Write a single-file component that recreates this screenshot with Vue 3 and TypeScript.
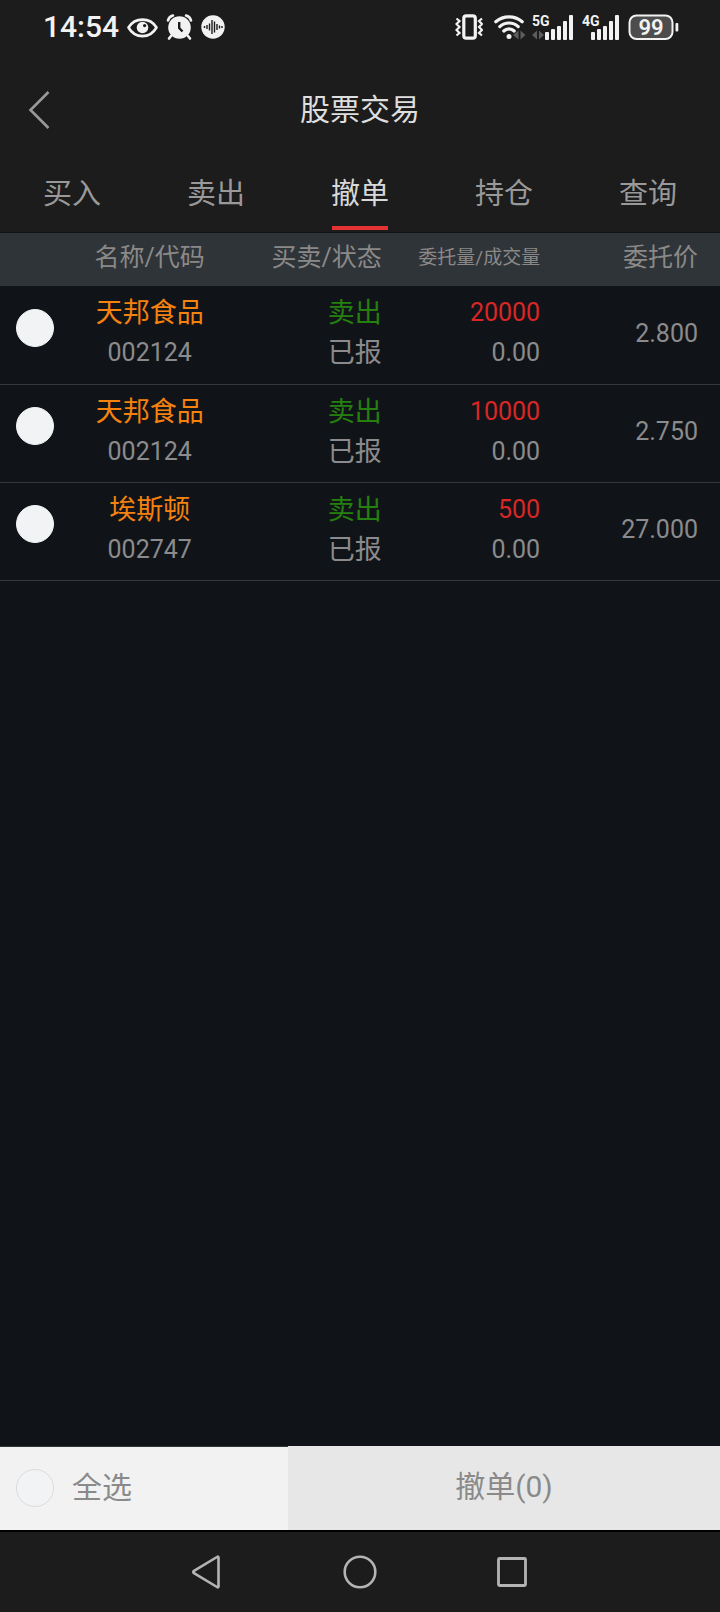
<script setup lang="ts">
import { computed, ref } from 'vue'

interface Order {
  id: number
  name: string
  code: string
  side: string
  status: string
  amount: string
  filled: string
  price: string
}

const tabs: string[] = ['买入', '卖出', '撤单', '持仓', '查询']
const activeTab = ref<string>('撤单')

const orders: Order[] = [
  { id: 1, name: '天邦食品', code: '002124', side: '卖出', status: '已报', amount: '20000', filled: '0.00', price: '2.800' },
  { id: 2, name: '天邦食品', code: '002124', side: '卖出', status: '已报', amount: '10000', filled: '0.00', price: '2.750' },
  { id: 3, name: '埃斯顿', code: '002747', side: '卖出', status: '已报', amount: '500', filled: '0.00', price: '27.000' },
]

const selected = ref<number[]>([])
const allSelected = computed<boolean>({
  get: () => selected.value.length === orders.length,
  set: (on) => {
    selected.value = on ? orders.map((o) => o.id) : []
  },
})
</script>

<template>
  <div class="screen">
    <div class="status">
      <div class="status-left">
        <span class="time">14:54</span>
        <svg class="eye" width="31" height="28" viewBox="0 0 31 28">
          <path d="M1.5 14.5C8 4 23 4 29.500 14.500C23 26 8 26 1.500 14.500Z" fill="none" stroke="#f2f2f2" stroke-width="2.600" stroke-linejoin="round" />
          <circle cx="15.500" cy="14.500" r="5.800" fill="#f2f2f2" />
          <circle cx="17.600" cy="12.600" r="1.600" fill="#1c1c1c" />
        </svg>
        <svg width="27" height="28" viewBox="0 0 27 28">
          <circle cx="13.500" cy="14.500" r="11.300" fill="#f2f2f2" />
          <path d="M2 7.500Q3 3.500 7 2.500M25 7.500Q24 3.500 20 2.500M5 23L3 25.500M22 23L24 25.500" fill="none" stroke="#f2f2f2" stroke-width="2.600" stroke-linecap="round" />
          <path d="M13.200 9V15L16.500 18.500" fill="none" stroke="#1c1c1c" stroke-width="2.400" />
        </svg>
        <svg width="24" height="28" viewBox="0 0 24 28">
          <circle cx="12" cy="14" r="11.700" fill="#f2f2f2" />
          <path d="M3.500 13V15M6 12V16M8.500 10.500V17.500M11 7V21M13.500 8.500V19.500M16 11V17M18.500 12.500V15.500M21 13V15" stroke="#1c1c1c" stroke-width="1.400" />
        </svg>
      </div>
      <div class="status-right">
        <svg class="vibrate" width="28" height="28" viewBox="0 0 28 28" fill="none" stroke="#f2f2f2">
          <rect x="8.800" y="2.800" width="11.500" height="22.400" rx="2.500" stroke-width="3.200" />
          <path d="M1.500 5.500L4.500 8L1.500 11L4.500 14L1.500 17L4.500 20L1.500 22.500M27 5.500L24 8L27 11L24 14L27 17L24 20L27 22.500" stroke-width="2.200" />
        </svg>
        <svg class="wifi" width="32" height="28" viewBox="0 0 32 28">
          <g fill="none" stroke="#f2f2f2" stroke-width="3.200" stroke-linecap="round">
            <path d="M1.800 8.800A20 20 0 0 1 28.200 8.800" />
            <path d="M5.800 13.600A13.500 13.500 0 0 1 24.200 13.600" />
            <path d="M9.800 18A7.500 7.500 0 0 1 20.200 18" />
          </g>
          <circle cx="15" cy="23.500" r="2.500" fill="#f2f2f2" />
          <path d="M24.500 17.500V26.500L19 22ZM26.500 17.500V26.500L31.500 22Z" fill="#5c5c5c" />
        </svg>
        <svg width="42" height="28" viewBox="0 0 42 28" fill="#f2f2f2">
          <text class="net" x="0" y="13">5G</text>
          <path d="M5 17.500V26.500L0 22ZM7 17.500V26.500L12 22Z" fill="#5c5c5c" />
          <rect x="13" y="19" width="4" height="8" rx="1" />
          <rect x="19" y="16" width="4" height="11" rx="1" />
          <rect x="25" y="13" width="4" height="14" rx="1" />
          <rect x="31" y="8" width="4" height="19" rx="1" />
          <rect x="37" y="2" width="4" height="25" rx="1" />
        </svg>
        <svg width="38" height="28" viewBox="0 0 38 28" fill="#f2f2f2">
          <text class="net" x="0" y="13">4G</text>
          <rect x="9" y="19" width="4" height="8" rx="1" />
          <rect x="15" y="16" width="4" height="11" rx="1" />
          <rect x="21" y="13" width="4" height="14" rx="1" />
          <rect x="27" y="8" width="4" height="19" rx="1" />
          <rect x="33" y="2" width="4" height="25" rx="1" />
        </svg>
        <svg width="51" height="28" viewBox="0 0 51 28">
          <rect x="1.500" y="2.500" width="43" height="23.500" rx="7" fill="#4d4d4d" stroke="#f2f2f2" stroke-width="2" />
          <rect x="47.500" y="10" width="2.800" height="8.500" rx="1" fill="#f2f2f2" />
          <text class="level" x="23" y="22" text-anchor="middle" fill="#f2f2f2">99</text>
        </svg>
      </div>
    </div>

    <header class="title-bar">
      <button class="back" type="button" aria-label="返回">
        <svg width="22" height="40" viewBox="0 0 22 40">
          <path d="M20.500 2L2.500 20L20.500 38" fill="none" stroke="#999" stroke-width="2.600" />
        </svg>
      </button>
      <h1>股票交易</h1>
    </header>

    <nav class="tabs">
      <button
        v-for="tab in tabs"
        :key="tab"
        type="button"
        class="tab"
        :class="{ active: tab === activeTab }"
        @click="activeTab = tab"
      >
        {{ tab }}
      </button>
    </nav>

    <main class="content">
      <table class="orders">
        <thead>
          <tr>
            <th class="pick"></th>
            <th class="name">名称/代码</th>
            <th class="side">买卖/状态</th>
            <th class="amount small">委托量/成交量</th>
            <th class="price">委托价</th>
          </tr>
        </thead>
        <tbody>
          <tr v-for="order in orders" :key="order.id">
            <td class="pick">
              <input v-model="selected" class="round" type="checkbox" :value="order.id" :aria-label="order.name" />
            </td>
            <td class="name">
              <div class="line orange">{{ order.name }}</div>
              <div class="line number">{{ order.code }}</div>
            </td>
            <td class="side">
              <div class="line green">{{ order.side }}</div>
              <div class="line">{{ order.status }}</div>
            </td>
            <td class="amount">
              <div class="line number red">{{ order.amount }}</div>
              <div class="line number">{{ order.filled }}</div>
            </td>
            <td class="price number">{{ order.price }}</td>
          </tr>
        </tbody>
      </table>
    </main>

    <footer class="actions">
      <label class="select-all">
        <input v-model="allSelected" class="round outlined" type="checkbox" />
        <span class="select-text">全选</span>
      </label>
      <button class="cancel" type="button">撤单({{ selected.length }})</button>
    </footer>

    <nav class="system">
      <button type="button" aria-label="返回上一页">
        <svg width="34" height="36" viewBox="0 0 34 36">
          <path d="M27.500 3.500V32.500Q27.500 34 26 33L3 19.200Q1.500 18 3 16.800L26 3Q27.500 2 27.500 3.500Z" fill="none" stroke="#b4b4b4" stroke-width="2.600" stroke-linejoin="round" />
        </svg>
      </button>
      <button type="button" aria-label="主屏幕">
        <svg width="34" height="36" viewBox="0 0 34 36">
          <circle cx="17" cy="18" r="15.300" fill="none" stroke="#b4b4b4" stroke-width="2.600" />
        </svg>
      </button>
      <button type="button" aria-label="最近任务">
        <svg width="34" height="36" viewBox="0 0 34 36">
          <rect x="3.500" y="4.500" width="27" height="27" rx="1" fill="none" stroke="#b4b4b4" stroke-width="2.800" />
        </svg>
      </button>
    </nav>
  </div>
</template>

<style>
body {
  margin: 0;
  background: #101418;
}
</style>

<style scoped>
.screen {
  display: flex;
  flex-direction: column;
  min-height: 100vh;
  background: #101418;
  color: #8b8b8d;
  font-family: Roboto, 'Noto Sans CJK SC', sans-serif;
}

button {
  border: 0;
  padding: 0;
  margin: 0;
  background: none;
  color: inherit;
  font: inherit;
  cursor: pointer;
}

svg {
  display: block;
}

.status {
  display: flex;
  justify-content: space-between;
  align-items: center;
  height: 54px;
  padding: 0 41px 0 43px;
  background: #1c1c1c;
}

.status-left,
.status-right {
  display: flex;
  align-items: center;
  gap: 8px;
}

.time {
  color: #f2f2f2;
  font-size: 30px;
  font-weight: 500;
  line-height: 32px;
}

.vibrate {
  margin-right: 3px;
}

.wifi {
  margin-right: -2px;
}

.net {
  font-size: 14px;
  font-weight: 700;
}

.level {
  font-size: 22px;
  font-weight: 600;
}

.title-bar {
  display: grid;
  grid-template-columns: 80px 1fr 80px;
  align-items: center;
  height: 112px;
  background: #1c1c1c;
}

.back {
  display: flex;
  align-items: center;
  height: 80px;
  padding-left: 28px;
}

h1 {
  margin: 0;
  color: #dedede;
  font-size: 30px;
  font-weight: 400;
  line-height: 42px;
  text-align: center;
}

.tabs {
  display: grid;
  grid-template-columns: repeat(5, 1fr);
  height: 66px;
  border-bottom: 1px solid #101418;
  background: #1c1c1c;
}

.tab {
  display: flex;
  flex-direction: column;
  align-items: center;
  justify-content: space-between;
  padding: 8px 0 2px;
  color: #999;
  font-size: 29px;
  line-height: 40px;
}

.tab::after {
  content: '';
  width: 56px;
  height: 4px;
}

.tab.active {
  color: #d8d8d8;
}

.tab.active::after {
  background: #e53333;
}

.content {
  flex: 1;
}

.orders {
  width: 100%;
  table-layout: fixed;
  border-collapse: collapse;
  font-size: 27px;
}

th,
td {
  box-sizing: border-box;
  padding: 0 0 3px;
}

th {
  height: 53px;
  background: #2f3438;
  color: #8b8988;
  font-size: 25px;
  font-weight: 400;
  line-height: 32px;
  white-space: nowrap;
}

th.small {
  font-size: 19px;
}

td {
  height: 98px;
  border-bottom: 1px solid #34373b;
}

.pick {
  width: 10%;
}

td.pick {
  padding: 0 0 14px 16px;
}

.name {
  width: 22%;
  padding-right: 3px;
  text-align: center;
}

.side,
.amount {
  width: 22%;
  padding-right: 7px;
  text-align: right;
}

.price {
  padding-right: 22px;
  text-align: right;
}

.line {
  line-height: 40px;
}

.number {
  font-size: 25px;
}

.orange {
  color: #f5820f;
}

.green {
  color: #25800f;
}

.red {
  color: #d92626;
}

.round {
  display: block;
  width: 38px;
  height: 38px;
  margin: 0;
  appearance: none;
  border: 1px solid #f1f3f5;
  border-radius: 50%;
  background: #f1f3f5;
}

.round.outlined {
  border-color: #dcdcdc;
}

.round:checked {
  background: #e53333;
}

.actions {
  display: grid;
  grid-template-columns: 2fr 3fr;
  height: 84px;
  border-bottom: 2px solid #000;
  color: #8a8a8a;
  font-size: 30px;
}

.select-all {
  display: flex;
  align-items: center;
  gap: 18px;
  padding: 0 0 2px 16px;
  border-top: 1px solid #34373b;
  background: #f2f2f2;
}

.select-text {
  padding-bottom: 6px;
}

.cancel {
  padding-bottom: 8px;
  background: #e7e7e7;
}

.system {
  display: flex;
  justify-content: center;
  align-items: center;
  gap: 118px;
  height: 80px;
  background: #1c1c1c;
}
</style>
